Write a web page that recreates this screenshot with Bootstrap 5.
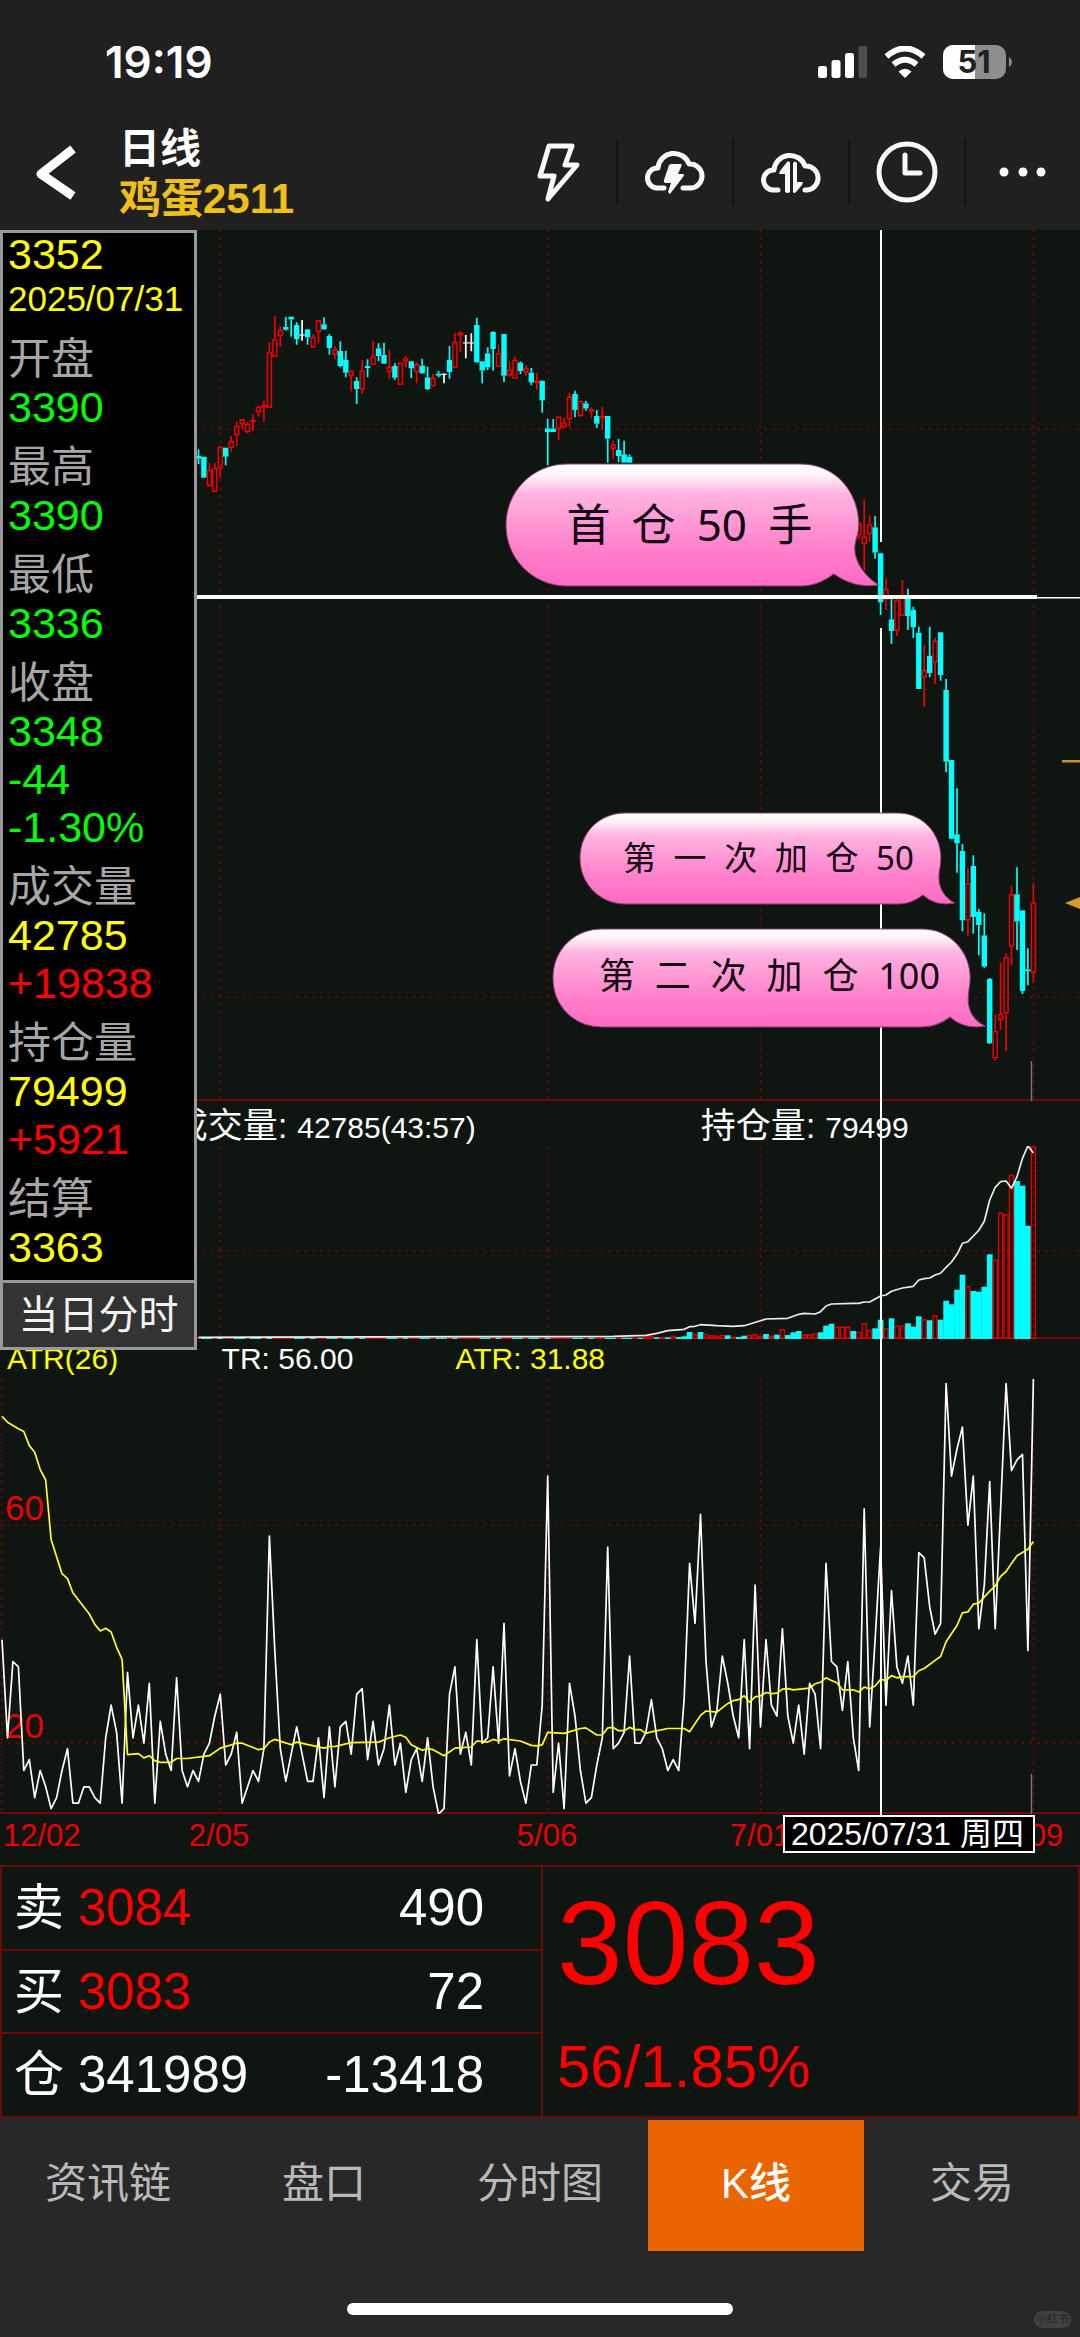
<!DOCTYPE html>
<html lang="zh-CN">
<head>
<meta charset="utf-8">
<meta name="viewport" content="width=device-width, initial-scale=1">
<title>鸡蛋2511 日线</title>
<link href="https://cdn.jsdelivr.net/npm/bootstrap@5.3.0/dist/css/bootstrap.min.css" rel="stylesheet">
<style>
:root{--ink:#0f1511;--bar:#202020;--foot:#282828;--rule:#6e0707;--up:#f00;--down:#0ff;--gold:#efc01c}
body{background:var(--foot);color:#fff;font-family:"Liberation Sans","Noto Sans CJK SC",sans-serif;min-height:100vh}
svg{display:block}
.app-top{background:var(--bar)}
.status-row{height:114px;padding:9px 67px 0 105px}
.clock-text{font:600 44px/48px Inter,"Liberation Sans",sans-serif}
.status-icons{gap:17px}
.tool-row{height:116px}
.back-btn{width:119px;padding-left:34px}
.title-box{line-height:50px;font-weight:700;font-size:42px;padding-top:3px}
.title-box h1{font-size:41px;line-height:50px;font-weight:700}
.gold-text{color:var(--gold)}
.tool-btn{width:116px;height:66px;border:0;border-radius:0;padding:0}
.tool-btn+.tool-btn{border-left:2px solid #151515}
.tool-btn svg{margin:auto}
.icon-line{fill:none;stroke:#f8f8f8;stroke-width:5;stroke-linecap:round;stroke-linejoin:round}
.icon-fill{fill:#f8f8f8}
.charts{background:var(--ink)}
.charts svg.plot{width:100%;height:auto}
.legend-row{display:grid;font-size:30px;line-height:40px}
.legend-vol{grid-template-columns:58.2% 1fr;padding:5px 0 0 16%;height:45px}
.legend-vol b{font-weight:400;font-size:35px}
.legend-atr{grid-template-columns:20% 21.8% 1fr;padding-left:7px;height:40px}
.yellow{color:#ff0}.lime{color:#0f0}.red{color:var(--up)}.soft{color:#a6a6a6}
.info-panel{left:0;top:0;width:197px;border:3px solid #999;background:#000;z-index:3;font-size:43px;line-height:48px}
.info-panel dl{padding:0 0 9px 5px;white-space:nowrap}
.info-panel dt{font-weight:400;margin-top:12px}
.info-panel dd{margin:0}
.info-panel .info-price{line-height:42px}
.info-date{font-size:35px}
.info-btn{border:0;border-top:3px solid #999;border-radius:0;background:#333;color:#f2f2f2;font-size:40px;line-height:48px;padding:8px 0;width:100%}
.cross-v{left:81.5%;width:2px;background:#fff;z-index:1}
.cross-high{top:0;height:312px}
.cross-low{top:398px;bottom:50px}
.bubble{z-index:2;color:#100010;font-family:"Noto Sans","Noto Sans CJK SC",sans-serif;line-height:1}
.bubble>svg{position:absolute;left:0;top:0;width:100%;height:100%}
.bubble>p{position:relative;margin:0;height:100%}
.bubble-a{left:46.8%;top:233px;width:34.7%;height:124px;font-size:44px}
.bubble-a p{padding:0 68px 3px 61px}
.bubble-b{left:53.6%;top:582px;width:34.9%;height:93px;font-size:33px}
.bubble-b p{padding:0 42px 3px 44px}
.bubble-c{left:51.1%;top:698px;width:40.2%;height:100px;font-size:36px}
.bubble-c p{padding:0 46px 4px 47px}
.axis-row{height:51px}
.date-tag{right:45px;top:1px;height:38px;line-height:34px;border:2px solid #fff;background:#000;font-size:32px;padding:0 9px 0 6px;white-space:nowrap}
.axis-text{fill:#e00;font-family:"Liberation Sans",sans-serif;font-size:31px}
.scale-text{font-size:35px}
.quote{background:var(--ink);border:2px solid var(--rule)}
.quote-left{border-right:2px solid var(--rule);width:calc(50% + 3px)}
.quote table{color:#fff;font-size:51px;line-height:60px}
.quote td,.quote th{height:83px;padding:0;font-weight:400}
.quote tr+tr>*{border-top:2px solid var(--rule)}
.quote th{width:76px;padding-left:12px;font-size:50px}
.quote .qty{text-align:right;padding-right:57px}
.quote-right{padding:10px 0 0 14px}
.big-price{font-size:118px;line-height:132px}
.big-change{font-size:60px;line-height:72px;margin-top:22px}
.tab-row{padding-top:2px}
.tab-row .nav-link{color:#b9b9b9;border-radius:0;font-size:42px;line-height:60px;padding:34px 0 37px;border:0}
.tab-row .nav-link.active{background:#ea6500;color:#fff;font-weight:500}
.home-zone{height:85px}
.home-bar{width:386px;height:12px;border-radius:6px;background:#fff;margin-top:52px}
.mark-pill{right:9px;bottom:8px;font-size:11px;line-height:17px;padding:0 2px;border-radius:9px;background:#404040;color:#242424}
</style>
<script src="https://cdn.jsdelivr.net/npm/bootstrap@5.3.0/dist/js/bootstrap.bundle.min.js"></script>
</head>
<body>
<header class="app-top">
  <div class="status-row d-flex align-items-center justify-content-between">
    <time class="clock-text">19:19</time>
    <div class="status-icons d-flex align-items-center">
      <svg width="49" height="32" viewBox="0 0 49 32" aria-label="信号"><g fill="#fff"><rect y="20" width="9" height="12" rx="2.5"/><rect x="13.500" y="14" width="9" height="18" rx="2.500"/><rect x="27" y="7" width="9" height="25" rx="2.500"/></g><rect x="40.500" width="8.500" height="32" rx="2.500" fill="#4e4e4e"/></svg>
      <svg width="42" height="32" viewBox="0 0 42 32" aria-label="无线网络"><g fill="none" stroke="#fff" stroke-width="6"><path d="M2.500 10.500Q21-5.500 39.500 10.500"/><path d="M9.500 18.500Q21 9 32.500 18.500"/></g><path d="M21 32L14.500 25.500Q21 20 27.500 25.500Z" fill="#fff"/></svg>
      <svg width="70" height="36" viewBox="0 0 70 36" aria-label="电量"><defs><clipPath id="cell"><rect y="1" width="63" height="34" rx="10"/></clipPath></defs><g clip-path="url(#cell)"><rect width="63" height="36" fill="#8e8e8e"/><rect width="32" height="36" fill="#fff"/></g><path d="M66 13Q69 15 69 18T66 23Z" fill="#8e8e8e"/><text x="31" y="29" text-anchor="middle" font-family="Inter,sans-serif" font-weight="700" font-size="31" fill="#202020">51</text></svg>
    </div>
  </div>
  <div class="tool-row d-flex align-items-center">
    <button class="back-btn btn border-0 rounded-0 py-0 pe-0" aria-label="返回"><svg width="44" height="58" viewBox="0 0 44 58"><path d="M39 6L7 31L39 53" fill="none" stroke="#fff" stroke-width="9" stroke-linejoin="round"/></svg></button>
    <div class="title-box flex-grow-1"><h1 class="m-0">日线</h1><div class="gold-text">鸡蛋2511</div></div>
    <button class="tool-btn btn" aria-label="闪电"><svg width="64" height="64" viewBox="-32 -32 64 64"><path class="icon-line" d="M-9-26H14L7-7H19L-10 27L-4 4H-18Z"/></svg></button>
    <button class="tool-btn btn" aria-label="云下单"><svg width="64" height="64" viewBox="-32 -32 64 64"><path class="icon-line" d="M-11 16H-18A10 10 0 0 1-17-4A16 16 0 0 1 14-8A12 12 0 1 1 16 16H8"/><path class="icon-fill" d="M-4-8H6Q7-8 6.500-6L3 2H8Q10 3 8 5L-5 22L-7 20L-4 11H-10Q-12 10-11 8L-6-7Z"/></svg></button>
    <button class="tool-btn btn" aria-label="云条件单"><svg width="64" height="64" viewBox="-32 -32 64 64"><path class="icon-line" d="M-13 18H-18A10 10 0 0 1-17-2A16 16 0 0 1 14-6A12 12 0 1 1 16 18H14"/><path class="icon-fill" d="M-1-9V20Q-3 22-6 20V2H-12L-11-1L-4-10Q-2-12-1-9ZM2-9Q4-12 6-9V10H12L11 13L5 20Q3 22 2 20Z"/></svg></button>
    <button class="tool-btn btn" aria-label="周期"><svg width="64" height="64" viewBox="-32 -32 64 64"><circle class="icon-line" r="28"/><path class="icon-line" d="M-2-17V1H13"/></svg></button>
    <button class="tool-btn btn" aria-label="更多"><svg width="64" height="64" viewBox="-32 -32 64 64" class="icon-fill"><circle cx="-19" r="4.500"/><circle r="4.500"/><circle cx="18" r="4.500"/></svg></button>
  </div>
</header>

<main>
  <section class="charts position-relative overflow-hidden">
    <svg class="plot" id="pricePlot" viewBox="0 230 1080 871"></svg>
    <div class="legend-row legend-vol"><span><b>成交量: </b>42785(43:57)</span><span><b>持仓量: </b>79499</span></div>
    <svg class="plot" id="volumePlot" viewBox="0 1146 1080 193"></svg>
    <div class="legend-row legend-atr"><span class="yellow">ATR(26)</span><span>TR: 56.00</span><span class="yellow">ATR: 31.88</span></div>
    <svg class="plot" id="atrPlot" viewBox="0 1379 1080 435"></svg>
    <div class="axis-row position-relative">
      <svg class="plot" viewBox="0 1814 1080 51"><g class="axis-text"><text x="3" y="1846">12/02</text><g text-anchor="middle"><text x="219" y="1846">2/05</text><text x="547" y="1846">5/06</text><text x="760" y="1846">7/01</text><text x="1033" y="1846">9/09</text></g></g></svg>
      <div class="date-tag position-absolute">2025/07/31 周四</div>
    </div>

    <div class="cross-v cross-high position-absolute"></div>
    <div class="cross-v cross-low position-absolute"></div>

    <div class="bubble bubble-a position-absolute">
      <svg viewBox="0 0 375 124" preserveAspectRatio="none"><defs><linearGradient id="pink" x2="0" y2="1"><stop offset="0" stop-color="#fff"/><stop offset=".1" stop-color="#fff0f9"/><stop offset=".24" stop-color="#ffb4e0"/><stop offset=".7" stop-color="#ff7fcb"/><stop offset="1" stop-color="#ff6ac4"/></linearGradient></defs><path fill="url(#pink)" stroke="#8a3a66" stroke-width="1" d="M62 1H296C330 1 354 28 354 62C354 72 350 76 350 86C350 100 362 115 374 122Q350 126 329 111C318 119 308 123 296 123H62C28 123 1 96 1 62S28 1 62 1Z"/></svg>
      <p class="d-flex align-items-center justify-content-between"><span>首</span><span>仓</span><span>50</span><span>手</span></p>
    </div>
    <div class="bubble bubble-b position-absolute">
      <svg viewBox="0 0 377 93" preserveAspectRatio="none"><path fill="url(#pink)" stroke="#8a3a66" stroke-width="1" d="M46 1H319C344 1 362 22 362 46C362 54 360 58 360 65C360 77 366 86 376 91Q357 95 344 83C336 89 328 92 319 92H46C21 92 1 72 1 46S21 1 46 1Z"/></svg>
      <p class="d-flex align-items-center justify-content-between"><span>第</span><span>一</span><span>次</span><span>加</span><span>仓</span><span>50</span></p>
    </div>
    <div class="bubble bubble-c position-absolute">
      <svg viewBox="0 0 434 100" preserveAspectRatio="none"><path fill="url(#pink)" stroke="#8a3a66" stroke-width="1" d="M50 1H370C398 1 418 24 418 50C418 58 416 63 416 71C416 83 422 93 433 98Q412 102 398 89C390 95 382 99 370 99H50C22 99 1 78 1 50S22 1 50 1Z"/></svg>
      <p class="d-flex align-items-center justify-content-between"><span>第</span><span>二</span><span>次</span><span>加</span><span>仓</span><span>100</span></p>
    </div>

    <aside class="info-panel position-absolute">
      <dl class="m-0">
        <dd class="info-price yellow">3352</dd><dd class="info-date yellow">2025/07/31</dd>
        <dt class="soft">开盘</dt><dd class="lime">3390</dd>
        <dt class="soft">最高</dt><dd class="lime">3390</dd>
        <dt class="soft">最低</dt><dd class="lime">3336</dd>
        <dt class="soft">收盘</dt><dd class="lime">3348</dd><dd class="lime">-44</dd><dd class="lime">-1.30%</dd>
        <dt class="soft">成交量</dt><dd class="yellow">42785</dd><dd class="red">+19838</dd>
        <dt class="soft">持仓量</dt><dd class="yellow">79499</dd><dd class="red">+5921</dd>
        <dt class="soft">结算</dt><dd class="yellow">3363</dd>
      </dl>
      <button class="info-btn d-block">当日分时</button>
    </aside>
  </section>

  <section class="quote d-flex">
    <div class="quote-left flex-shrink-0">
      <table class="w-100">
        <tbody>
          <tr><th scope="row">卖</th><td class="red">3084</td><td class="qty">490</td></tr>
          <tr><th scope="row">买</th><td class="red">3083</td><td class="qty">72</td></tr>
          <tr><th scope="row">仓</th><td>341989</td><td class="qty">-13418</td></tr>
        </tbody>
      </table>
    </div>
    <div class="quote-right flex-grow-1 red"><div class="big-price">3083</div><div class="big-change">56/1.85%</div></div>
  </section>
</main>

<footer class="position-relative">
  <nav class="tab-row nav nav-pills nav-justified row row-cols-5 g-0">
    <a class="nav-link col" href="#">资讯链</a>
    <a class="nav-link col" href="#">盘口</a>
    <a class="nav-link col" href="#">分时图</a>
    <a class="nav-link col active" href="#" aria-current="page">K线</a>
    <a class="nav-link col" href="#">交易</a>
  </nav>
  <div class="home-zone d-flex justify-content-center"><div class="home-bar"></div></div>
  <span class="mark-pill position-absolute">小红书</span>
</footer>

<script>
const step = 5.457, xAt = i => 2 + i * step, r1 = n => Math.round(n * 10) / 10;
const grid = [0, 40, 100, 139, 189];
const dotted = (x1, y1, x2, y2) => `<path d="M${r1(x1)} ${y1}L${r1(x2)} ${y2}" stroke="#7e0606" stroke-width="1.600" stroke-dasharray="2.500 5.300"/>`;
const frame = (top, bottom, rows) => grid.map(i => dotted(xAt(i), top, xAt(i), bottom)).join('') + rows.map(y => dotted(0, y, 1080, y)).join('')
  + `<path d="M0 ${bottom - 1}H1080" stroke="#780505" stroke-width="2"/>`;

// Candles: colour, high, body top, body bottom, low, in thirds of a pixel below the plot's top edge
const candles = {36:'c 688 708 716 732',37:'c 710 710 773 773',38:'r 728 750 798 800',39:'r 730 744 815 815',40:'r 678 680 745 775',41:'c 683 683 710 736',42:'r 648 663 683 695',43:'r 605 618 645 678',44:'r 598 598 613 626',45:'r 606 612 636 640',46:'r 583 600 606 632',47:'r 557 561 576 590',48:'r 542 555 562 605',49:'r 366 397 563 563',50:'r 287 358 410 410',51:'r 318 330 348 380',52:'c 290 321 329 332',53:'c 290 290 298 350',54:'c 307 315 357 374',55:'w 300 343 345 362',56:'c 328 328 352 374',57:'r 343 352 382 384',58:'r 300 301 336 370',59:'c 292 313 328 330',60:'c 342 348 384 404',61:'r 378 387 404 418',62:'c 364 393 438 442',63:'c 392 420 458 472',64:'r 450 452 468 514',65:'c 472 483 507 552',66:'r 420 452 508 522',67:'c 418 438 444 472',68:'r 362 410 434 434',69:'c 370 385 408 424',70:'c 368 405 431 432',71:'r 390 440 456 478',72:'c 430 438 473 480',73:'r 428 428 494 494',74:'r 407 415 425 442',75:'c 423 424 445 474',76:'r 427 433 456 490',77:'c 416 437 460 461',78:'c 440 472 507 510',79:'r 462 474 498 500',80:'c 453 461 467 472',81:'w 460 461 463 490',82:'c 378 420 456 476',83:'r 338 366 443 445',84:'r 334 338 346 395',85:'w 345 367 369 415',86:'w 340 367 369 394',87:'c 293 315 427 428',88:'c 424 424 452 490',89:'c 382 400 442 450',90:'c 334 336 387 452',91:'r 374 400 440 440',92:'c 342 342 467 486',93:'r 424 450 466 470',94:'r 410 420 475 476',95:'c 424 428 453 462',96:'r 436 444 458 468',97:'c 444 458 487 496',98:'r 458 483 487 510',99:'c 482 482 541 578',100:'c 597 625 636 736',101:'c 597 626 636 636',102:'r 590 590 627 660',103:'r 593 608 622 624',104:'r 518 530 597 622',105:'c 512 522 570 592',106:'r 543 543 588 590',107:'c 543 550 566 572',108:'r 562 568 574 594',109:'c 570 588 611 624',110:'r 560 588 593 630',111:'c 588 588 656 728',112:'r 662 674 686 718',113:'c 657 690 708 726',114:'c 662 703 728 728',115:'c 703 710 728 728',157:'r 905 910 945 960',158:'r 838 950 972 1052',159:'r 886 913 942 965',160:'c 888 922 998 1016',161:'c 998 1000 1147 1185',162:'r 1075 1107 1138 1170',163:'c 1130 1198 1233 1272',164:'r 1135 1140 1232 1248',165:'r 1080 1130 1187 1187',166:'c 1106 1135 1188 1230',167:'c 1160 1170 1222 1254',168:'c 1220 1238 1407 1407',169:'r 1274 1350 1372 1460',170:'c 1220 1307 1359 1372',171:'r 1254 1263 1328 1392',172:'c 1237 1237 1365 1382',173:'c 1377 1410 1625 1657',174:'c 1620 1620 1856 1858',175:'c 1705 1843 1870 1958',176:'c 1872 1893 2101 2134',177:'r 1944 1990 2101 2148',178:'c 1906 1938 2091 2141',179:'c 2067 2075 2115 2206',180:'c 2080 2146 2240 2244',181:'c 2274 2277 2470 2472',182:'r 2383 2434 2515 2522',183:'r 2227 2382 2400 2430',184:'r 2200 2212 2380 2494',185:'r 1998 2023 2180 2236',186:'c 1942 2023 2105 2190',187:'c 2071 2071 2313 2322',188:'c 2185 2248 2254 2296',189:'r 1990 2048 2258 2288'};
const ink = {c:'#00ffff', r:'#f00000', w:'#ffffff'};
let price = frame(230, 1101, [429, 997]);
for (const [i, row] of Object.entries(candles)) {
  const [k, ...v] = row.split(' '), [h, t, b, l] = v.map(n => 220 + n / 3), x = xAt(i), col = ink[k];
  price += `<path d="M${r1(x)} ${r1(h)}V${r1(t)}M${r1(x)} ${r1(b)}V${r1(l)}" stroke="${col}" stroke-width="1.700"/>`;
  price += k === 'r'
    ? `<rect x="${r1(x - 2)}" y="${r1(t + .5)}" width="4" height="${r1(Math.max(1, b - t - 1))}" fill="none" stroke="${col}" stroke-width="1.500"/>`
    : `<rect x="${r1(x - 2.7)}" y="${r1(t)}" width="5.400" height="${r1(Math.max(1.2, b - t))}" fill="${col}"/>`;
}
price += `<rect y="595" width="1037" height="4" fill="#fff"/><rect x="1037" y="597" width="43" height="1.500" fill="#fff"/>
  <rect x="1062" y="760" width="18" height="2.500" fill="#c8922a"/><path d="M1065 903L1080 897V909Z" fill="#d69c22"/>
  <path d="M1031.500 1061V1101" stroke="#777" stroke-width="1.500"/>`;
pricePlot.innerHTML = price;

// Volume: colour and bar top, in thirds of a pixel below 1080
const vol = 'r769 r768 c772 r771 c772 r767 c771 c769 c756 r762 c756 r762 r766 r767 r765 c766 r770 c771 c767 r765 r763 r768 c762 r768 c764 r748 c765 c757 c753 r763 r763 r760 c757 c737 c731 r740 r740 r740 c753 r757 r730 r750 c745 c719 r745 c715 r737 r737 c730 c740 c709 r718 c721 r706 c719 c662 c673 c629 c584 r619 c633 c635 c620 c523 r539 r398 r403 r284 c303 c317 c437 r197'.split(' ');
let bars = frame(1146, 1339, [1251]);
for (let i = 36; i < 190; i++) {
  const early = 'rrcccrcrcrrccrrrc'[i * 7 % 17] + 773, s = vol[i - 190 + vol.length] || early, x = xAt(i), y = 1080 + s.slice(1) / 3;
  bars += s[0] === 'r'
    ? `<rect x="${r1(x - 2)}" y="${r1(y + .5)}" width="4" height="${r1(1338 - y)}" fill="none" stroke="#e00000" stroke-width="1.400"/>`
    : `<rect x="${r1(x - 2.8)}" y="${r1(y)}" width="5.700" height="${r1(1339 - y)}" fill="#00ffff"/>`;
}
const poly = (pts, col) => `<polyline points="${pts.join(' ')}" fill="none" stroke="${col}" stroke-width="1.700" stroke-linejoin="round"/>`;
const oi = '36,772 90,770 100,770 112,769 118,766 120,760 122,752 125,748 126,740 127,739 128,734 131,737 134,739 136,737 139,722 140,717 144,715 146,703 147,700 149,702 150,695 151,678 152,672 156,670 157,670 158,666 159,666 160,657 161,648 162,645 163,634 165,624 167,619 168,600 169,596 170,594 171,585 172,580 173,562 174,546 175,523 176,490 177,485 178,468 179,451 180,424 181,360 182,322 183,305 184,303 185,325 186,290 187,235 188,197 189,219'.split(' ').map(p => { const [i, y] = p.split(','); return r1(xAt(i)) + ',' + r1(1080 + y / 3); });
volumePlot.innerHTML = bars + poly(oi, '#ececec');

const tr = [39,21,35,34,15,17,10,15,12,8,10,15,19,9,9,12,12,10,9,21,27,22,9,33,21,27,20,31,9,24,18,15,32,15,12,15,13,18,20,25,29,16,18,22,9,12,15,13,19,58,37,19,13,18,23,18,13,13,21,10,23,12,23,24,18,29,30,17,24,16,19,27,16,20,11,17,19,13,21,12,7,8,29,34,18,22,16,39,20,21,34,20,42,14,19,13,9,16,16,27,69,11,20,8,31,25,15,9,10,16,21,56,19,20,22,36,20,20,22,28,21,19,15,17,15,28,53,42,62,35,23,26,36,31,25,21,39,19,49,23,39,27,25,41,25,20,27,18,31,29,19,53,35,34,26,35,21,15,63,23,39,56,27,48,34,31,36,27,55,54,45,40,42,86,69,74,78,60,69,41,49,68,41,63,86,70,72,73,37,87];
const atr = [0,80,1,78.9,3,77.7,4,77.2,5,74.6,6,73.4,7,70.2,8,68.3,9,57.4,11,51.1,12,50.2,13,47.6,16,43.7,17,41.8,18,40.6,19,41.1,20,40.4,21,37.6,22,35.4,23,17.9,25,18.1,26,17.3,27,17.7,28,16.8,29,16.5,31,16.5,32,17.2,34,17.2,38,17.7,40,19.1,43,20,44,20,47,18.8,48,19,49,20.2,50,20.7,53,19.7,54,20.2,59,19.1,60,19.4,61,19.4,64,20.1,69,20.2,71,21,73,21.5,74,21.1,75,19.7,77,18.7,78,19,79,18.8,81,17.7,83,19.1,86,19.3,87,20.4,89,20.2,90,20.7,91,20.4,92,20.8,95,20.4,97,19.6,98,19.5,99,19.7,100,22,103,21.8,106,22.7,107,22.8,109,21.5,110,21.5,111,22.8,112,22.9,113,22.3,114,22.3,115,22.9,116,22.5,117,22.5,118,21.8,119,22.1,122,22.7,125,22.7,126,22.1,128,25.1,129,25.9,131,25.7,133,27.3,134,27.8,135,28,136,28.7,137,27.5,138,28.5,139,28.7,140,29.3,141,29.1,142,29.2,143,29.9,144,30,145,29.8,148,30.1,149,30.9,150,31.2,151,32,152,31.5,153,31.1,154,29.8,156,29.8,157,29.4,158,30.3,159,30,160,30.5,161,31.7,162,31.5,163,32.4,164,32,165,32.2,167,32.2,168,33.3,169,33.7,171,35.2,172,35.9,173,38.6,175,41.6,176,43.9,177,44.1,178,45.5,179,45.7,181,47.9,182,48.8,183,50.6,184,51.5,185,53,186,54.4,188,55.6,189,57];
const yTr = v => r1(1743.2 - (v - 20) * 5.45);
const atrPts = [];
for (let k = 0; k < atr.length; k += 2) atrPts.push(r1(xAt(atr[k])) + ',' + yTr(atr[k + 1]));
atrPlot.innerHTML = frame(1379, 1814, [1525, 1743])
  + '<g class="axis-text"><text class="scale-text" x="5" y="1520">60</text><text class="scale-text" x="5" y="1738">20</text></g>'
  + poly(tr.map((v, i) => r1(xAt(i)) + ',' + yTr(v)), '#fff') + poly(atrPts, '#ffff20')
  + '<path d="M1031.500 1774V1814" stroke="#777" stroke-width="1.500"/>';
</script>
</body>
</html>
